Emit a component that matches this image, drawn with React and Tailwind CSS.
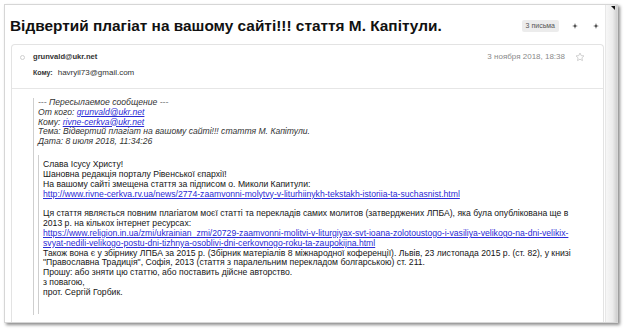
import React from "react";

const font = { fontFamily: '"Liberation Sans", Arial, sans-serif' };

function Spark() {
  return (
    <svg width="6" height="6" viewBox="0 0 6 6">
      <path d="M3 0 L3.6 2.4 L6 3 L3.6 3.6 L3 6 L2.4 3.6 L0 3 L2.4 2.4 Z" fill="#222" />
    </svg>
  );
}

function Star() {
  return (
    <svg width="10" height="10" viewBox="0 0 24 24" fill="none" stroke="#c8c8c8" strokeWidth="2" strokeLinejoin="round">
      <path d="M12 2.5l2.9 6.1 6.6.8-4.9 4.6 1.3 6.6L12 17.3l-5.9 3.3 1.3-6.6-4.9-4.6 6.6-.8z" />
    </svg>
  );
}

const link = "text-[#2b2bd6] underline";

export default function App() {
  return (
    <div className="w-[624px] h-[329px] bg-white overflow-hidden" style={font}>
      <div className="ml-[4px] mt-[4px] w-[614px] h-[319px] border border-[#d6d6d6] bg-white flex shadow-[2px_2px_3px_rgba(0,0,0,0.45)]">
        <div className="flex-1 flex flex-col min-w-0">
          <div className="flex items-center pt-[12px] pl-[5px] h-[30px]">
            <div className="text-[15.4px] leading-[18px] font-bold text-[#111] whitespace-nowrap">
              Відвертий плагіат на вашому сайті!!! стаття М. Капітули.
            </div>
            <div className="flex-1" />
            <div className="h-[12px] px-[4px] bg-[#ececec] rounded-[2px] text-[7px] leading-[12px] text-[#555] whitespace-nowrap">
              3 письма
            </div>
            <div className="ml-[13px] flex items-center gap-[15px] mr-[6px]">
              <Spark />
              <Spark />
            </div>
          </div>
          <div className="mt-[9px] ml-[6px] mr-[1px] flex-1 border border-b-0 border-[#e3e3e3] rounded-t-[4px] flex flex-col">
            <div className="border-b border-[#e6e6e6] pt-[7px] pb-[10px]">
              <div className="flex items-center h-[10px]">
                <div className="w-[21px] flex justify-center">
                  <div className="w-[5px] h-[5px] rounded-full border border-[#cfcfcf]" />
                </div>
                <div className="text-[7.6px] font-bold text-[#333] whitespace-nowrap">grunvald@ukr.net</div>
                <div className="flex-1" />
                <div className="text-[8px] text-[#8a8a8a] whitespace-nowrap">3 ноября 2018, 18:38</div>
                <div className="ml-[10px] mr-[18px] flex items-center">
                  <Star />
                </div>
              </div>
              <div className="flex items-center h-[10px] mt-[6px] pl-[21px] text-[8px] text-[#333] whitespace-nowrap">
                <span className="font-bold text-[7px] mr-[5px]">Кому:</span>
                <span>havryil73@gmail.com</span>
              </div>
            </div>
            <div className="flex-1 pt-[9px] pl-[21px]">
              <div className="border-l border-[#cfcfcf] pl-[4px] h-[217px] text-[8.6px] leading-[9.8px] text-[#222] whitespace-nowrap">
                <div className="italic text-[#333]">
                  <div>--- Пересылаемое сообщение ---</div>
                  <div>От кого: <span className={link}>grunvald@ukr.net</span></div>
                  <div>Кому: <span className={link}>rivne-cerkva@ukr.net</span></div>
                  <div>Тема: Відвертий плагіат на вашому сайті!!! стаття М. Капітули.</div>
                  <div>Дата: 8 июля 2018, 11:34:26</div>
                </div>
                <div className="mt-[8px] ml-[0px] border-l border-[#cfcfcf] pl-[4px] pt-[5px] h-[159px] text-[8.63px] leading-[9.85px] text-[#151515]">
                  <div>Слава Ісусу Христу!</div>
                  <div>Шановна редакція порталу Рівенської єпархії!</div>
                  <div>На вашому сайті змещена стаття за підписом о. Миколи Капитули:</div>
                  <div className={link}>http://www.rivne-cerkva.rv.ua/news/2774-zaamvonni-molytvy-v-liturhiinykh-tekstakh-istoriia-ta-suchasnist.html</div>
                  <div className="h-[9.85px]" />
                  <div>Ця стаття являється повним плагіатом моєї статті та перекладів самих молитов (затверджених ЛПБА), яка була опублікована ще в</div>
                  <div>2013 р. на кількох інтернет ресурсах:</div>
                  <div className={link}>https://www.religion.in.ua/zmi/ukrainian_zmi/20729-zaamvonni-molitvi-v-liturgiyax-svt-ioana-zolotoustogo-i-vasiliya-velikogo-na-dni-velikix-</div>
                  <div className={link}>svyat-nedili-velikogo-postu-dni-tizhnya-osoblivi-dni-cerkovnogo-roku-ta-zaupokijna.html</div>
                  <div>Також вона є у збірнику ЛПБА за 2015 р. (Збірник матеріалів 8 міжнародної коференції). Львів, 23 листопада 2015 р. (ст. 82), у книзі</div>
                  <div>"Православна Традиція", Софія, 2013 (стаття з паралельним перекладом болгарською) ст. 211.</div>
                  <div>Прошу: або зняти цю статтю, або поставить дійсне авторство.</div>
                  <div>з повагою,</div>
                  <div>прот. Сергій Горбик.</div>
                </div>
              </div>
            </div>
          </div>
        </div>
        <div className="w-[12px] relative bg-[linear-gradient(to_right,#f7f7f7,#ececec_60%,#cfcfcf)] border-l border-[#e8e8e8]">
          <div className="absolute top-[1px] right-[2px] w-0 h-0 border-l-[4px] border-l-transparent border-t-[4px] border-t-[#111]" />
        </div>
      </div>
    </div>
  );
}
